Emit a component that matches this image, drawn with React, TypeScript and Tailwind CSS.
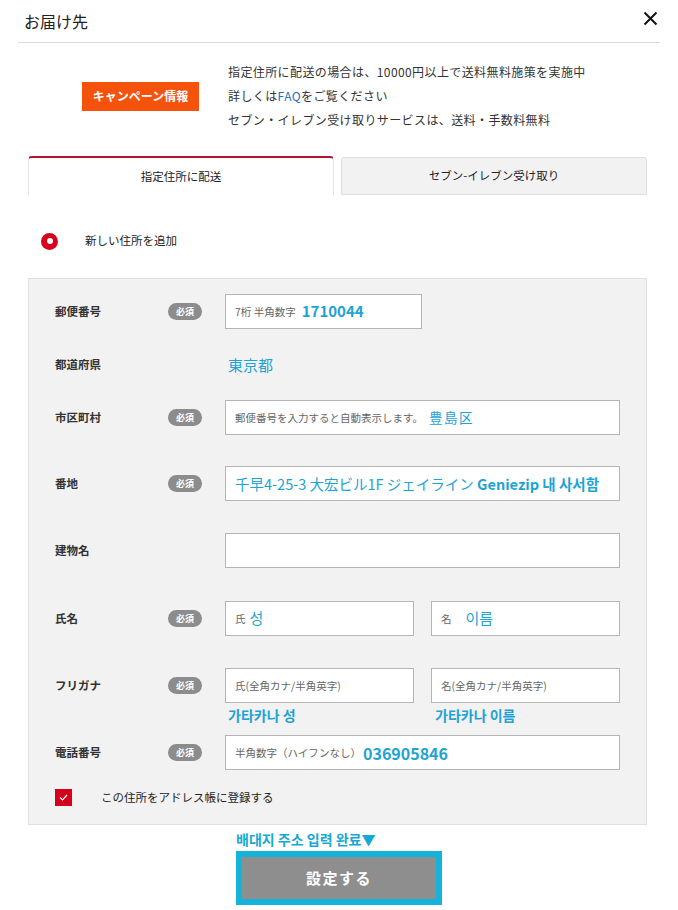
import React from "react";

function Badge() {
  return (
    <span className="flex h-[17px] w-[34px] items-center justify-center rounded-full bg-[#8c8c8c] text-[9px] font-bold leading-none text-white">
      必須
    </span>
  );
}

function Row({
  label,
  required,
  children,
  className = "",
}: {
  label: string;
  required?: boolean;
  children?: React.ReactNode;
  className?: string;
}) {
  return (
    <div className={`flex h-[35px] items-center ${className}`}>
      <div className="w-[113px] shrink-0 text-[11.5px] font-bold text-[#333]">{label}</div>
      <div className="w-[57px] shrink-0">{required && <Badge />}</div>
      <div className="min-w-0 flex-1">{children}</div>
    </div>
  );
}

function Box({ children, className = "" }: { children?: React.ReactNode; className?: string }) {
  return (
    <div
      className={`flex h-[35px] items-center whitespace-nowrap border border-[#b5b5b5] bg-white px-[9px] ${className}`}
    >
      {children}
    </div>
  );
}

const ph = "text-[10.5px] text-[#666]";
const cy = "text-[#1ea3d5]";

export default function App() {
  return (
    <div className="w-[678px] min-h-[910px] bg-white font-['Noto_Sans_CJK_JP','Noto_Sans_CJK_KR',sans-serif] text-[#333]">
      {/* header */}
      <div className="mx-[18px] flex h-[43px] items-center justify-between border-b border-[#dcdcdc] pl-[6px] pr-[2px]">
        <h1 className="text-[16px] text-[#222]">お届け先</h1>
        <svg width="15" height="15" viewBox="0 0 15 15" className="mb-[6px]">
          <path d="M1.5 1.5 L13.5 13.5 M13.5 1.5 L1.5 13.5" stroke="#111" strokeWidth="2" />
        </svg>
      </div>

      {/* campaign */}
      <div className="flex items-center gap-[29px] pl-[82px] pt-[17px]">
        <div className="flex h-[29px] w-[117px] items-center justify-center bg-[#f5520c] text-[12px] font-bold text-white">
          キャンペーン情報
        </div>
        <div className="text-[12px] leading-[24px] tracking-[0.4px] text-[#333]">
          <p>指定住所に配送の場合は、10000円以上で送料無料施策を実施中</p>
          <p>
            詳しくは<span className="text-[#1d6fb8]">FAQ</span>をご覧ください
          </p>
          <p>セブン・イレブン受け取りサービスは、送料・手数料無料</p>
        </div>
      </div>

      {/* tabs */}
      <div className="ml-[28px] mt-[24px] grid w-[619px] grid-cols-2 gap-[7px]">
        <div className="flex h-[39px] items-center justify-center rounded-t-[4px] border-x border-t-2 border-x-[#e2e2e2] border-t-[#b3132e] bg-white text-[11.5px] text-[#222]">
          指定住所に配送
        </div>
        <div className="mt-[1px] flex h-[38px] items-center justify-center rounded-t-[3px] border border-[#dedede] bg-[#f2f2f2] text-[11.5px] text-[#222]">
          セブン-イレブン受け取り
        </div>
      </div>

      {/* radio */}
      <div className="ml-[41px] mt-[34px] flex h-[24px] items-center gap-[27px]">
        <span className="flex h-[17px] w-[17px] items-center justify-center rounded-full bg-[#d7001e]">
          <span className="h-[6px] w-[6px] rounded-full bg-white" />
        </span>
        <span className="text-[11.5px] text-[#222]">新しい住所を追加</span>
      </div>

      {/* panel */}
      <div className="ml-[28px] mt-[25px] w-[619px] border border-[#e0e0e0] bg-[#f2f2f2] px-[26px] pb-[18px] pt-[15px]">
        <Row label="郵便番号" required>
          <Box className="w-[197px]">
            <span className={ph}>7桁 半角数字</span>
            <span className={`ml-[6px] text-[15px] font-bold ${cy}`}>1710044</span>
          </Box>
        </Row>

        <Row label="都道府県" className="mt-[18px]">
          <span className={`pl-[3px] text-[15px] ${cy}`}>東京都</span>
        </Row>

        <Row label="市区町村" required className="mt-[18px]">
          <Box>
            <span className={ph}>郵便番号を入力すると自動表示します。</span>
            <span className={`ml-[6px] text-[13.5px] tracking-[1.5px] ${cy}`}>豊島区</span>
          </Box>
        </Row>

        <Row label="番地" required className="mt-[31px]">
          <Box>
            <span className={`text-[14.5px] ${cy}`}>
              千早4-25-3 大宏ビル1F ジェイライン <span className="font-semibold">Geniezip 내 사서함</span>
            </span>
          </Box>
        </Row>

        <Row label="建物名" className="mt-[32px]">
          <Box />
        </Row>

        <Row label="氏名" required className="mt-[33px]">
          <div className="grid grid-cols-2 gap-[17px]">
            <Box>
              <span className={ph}>氏</span>
              <span className={`ml-[4px] text-[15px] ${cy}`}>성</span>
            </Box>
            <Box>
              <span className={ph}>名</span>
              <span className={`ml-[14px] text-[15px] ${cy}`}>이름</span>
            </Box>
          </div>
        </Row>

        <Row label="フリガナ" required className="mt-[32px]">
          <div className="grid grid-cols-2 gap-[17px]">
            <div className="relative">
              <Box>
                <span className={ph}>氏(全角カナ/半角英字)</span>
              </Box>
              <span className={`absolute left-[3px] top-[39px] whitespace-nowrap text-[14px] font-semibold leading-[16px] ${cy}`}>
                가타카나 성
              </span>
            </div>
            <div className="relative">
              <Box>
                <span className={ph}>名(全角カナ/半角英字)</span>
              </Box>
              <span className={`absolute left-[4px] top-[39px] whitespace-nowrap text-[14px] font-semibold leading-[16px] ${cy}`}>
                가타카나 이름
              </span>
            </div>
          </div>
        </Row>

        <Row label="電話番号" required className="mt-[32px]">
          <Box>
            <span className={ph}>半角数字（ハイフンなし）</span>
            <span className={`ml-[2px] text-[16px] font-bold ${cy}`}>036905846</span>
          </Box>
        </Row>

        <div className="mt-[19px] flex h-[17px] items-center gap-[29px]">
          <span className="flex h-[17px] w-[17px] items-center justify-center bg-[#d2001c]">
            <svg width="9" height="7" viewBox="0 0 9 7">
              <path d="M1 3.5 L3.5 6 L8 1" stroke="white" strokeWidth="1.2" fill="none" />
            </svg>
          </span>
          <span className="text-[11.5px] text-[#222]">この住所をアドレス帳に登録する</span>
        </div>
      </div>

      {/* button */}
      <div className="mx-auto mt-[6px] w-[206px]">
        <p className="whitespace-nowrap text-[14px] font-bold leading-[16px] text-[#17a8d6]">배대지 주소 입력 완료▼</p>
        <div className="mt-[4px] h-[54px] bg-[#14b4da] p-[6px]">
          <div className="flex h-full items-center justify-center bg-[#8e8e8e] text-[15px] font-bold tracking-[1.5px] text-white">
            設定する
          </div>
        </div>
      </div>
    </div>
  );
}
